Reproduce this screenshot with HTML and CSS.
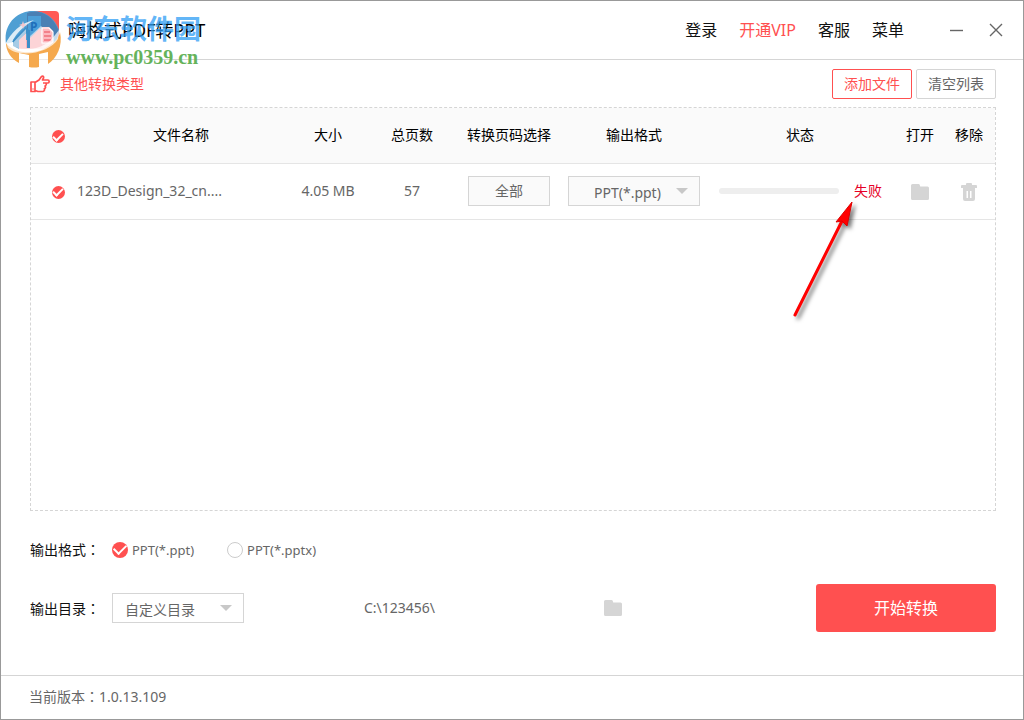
FILE: index.html
```html
<!DOCTYPE html>
<html lang="zh-CN">
<head>
<meta charset="utf-8">
<title>嗨格式PDF转PPT</title>
<link rel="stylesheet" href="styles.css">
</head>
<body>
<div class="window">
  <header class="titlebar">
    <svg class="logo" viewBox="0 0 32 38" aria-hidden="true">
      <rect width="32" height="38" rx="4" fill="#ff5a55"/>
    </svg>
    <h1 class="title">嗨格式PDF转PPT</h1>
    <nav class="nav">
      <a href="#">登录</a>
      <a href="#" class="vip">开通VIP</a>
      <a href="#">客服</a>
      <a href="#">菜单</a>
    </nav>
    <div class="controls">
      <button class="control" aria-label="最小化"><svg viewBox="0 0 14 14"><path d="M0 7.5h13"/></svg></button>
      <button class="control" aria-label="关闭"><svg viewBox="0 0 14 14"><path d="M1 1l12 12M13 1L1 13"/></svg></button>
    </div>
    <div class="watermark">
      <svg class="mark" viewBox="0 0 58 58" aria-hidden="true">
        <path d="M14 22h40v14q0 3-3 3H14z" fill="#fbb1b6"/>
        <path d="M1 34C-2 14 12 1 28 1c12 0 22 7 26 19l-2 10H14z" fill="#4f9fd3"/>
        <path d="M22 3c12-4 25 1 31 16l-1 12L36 16 25 27l-3-6z" fill="#4a80b4"/>
        <path d="M23 6h13v20H23z" fill="#4c9fd8"/>
        <path d="M0 35C6 22 16 13 29 10 17 17 9 25 5 37z" fill="#fff" fill-opacity=".8"/>
        <path d="M8 36V30L21 17l4 4v17h-3V23l-8 9v7z" fill="#3d8fc8"/>
        <path d="M4 37L21 19v4L14 31v22l10 3V27L36 16l12 13v9l-5 4v13l-9 1V44H24V27l12-8 9 11v8H14z" fill="#fff" fill-opacity=".55"/>
        <path d="M14 30l7-7v15h-7zM25 28l10-10 2 3v17H25z" fill="#fcd4d7"/>
        <path d="M22 20h3v18h-3zM48 24l4 5v8h-4z" fill="#3d8fc8"/>
        <path d="M37 17h7l4 4v12H37z" fill="#fcb9bf"/>
        <path d="M37 18h7l4 4v11H37z" fill="none" stroke="#fff" stroke-width="1.2"/>
        <path d="M39 22h6M39 26h7M39 30h7" stroke="#ef6f7b" stroke-width="1.5"/>
        <path d="M18 11l1 3 3 1-3 1-1 3-1-3-3-1 3-1z" fill="#f5c6cb"/>
        <path d="M1 33c7 10 28 13 41 4 7-4 12-9 13-15 3 14-3 26-12 32V42l-9 2v13q-5 1-10 0V45l-10-2v10C6 49 1 41 1 33z" fill="#f5a94e"/>
        <path d="M1 32c10 10 32 10 45-2l8-10-1 9C46 42 16 49 3 38z" fill="#fff" fill-opacity=".7"/>
      </svg>
      <span class="mark-letter">P</span>
      <div class="mark-text">
        <span class="mark-name">河东软件园</span>
        <span class="mark-url">www.pc0359.cn</span>
      </div>
    </div>
  </header>

  <main class="content">
    <div class="toolbar">
      <a href="#" class="other">
        <svg class="hand" viewBox="0 0 20 18" aria-hidden="true">
          <path d="M1 7h4v9.500H1zM5 7.500L9 5l2.500-3.500c1-1 2.500 0 2 1.500L12.500 5H18c1.500 0 1.500 3 0 3h-5M15.500 8c1.200.5 1 2.500-.5 3 1 .8.500 2.400-.7 2.700.6 1-.1 2.600-1.300 2.800H8L5 15.500" />
          <path d="M2.500 14h1"/>
        </svg>
        <span>其他转换类型</span>
      </a>
      <div class="actions">
        <button class="btn btn-add">添加文件</button>
        <button class="btn">清空列表</button>
      </div>
    </div>

    <section class="panel">
      <table class="files">
        <colgroup>
          <col class="c-check"><col class="c-name"><col class="c-size"><col class="c-pages"><col class="c-range"><col class="c-format"><col><col class="c-open"><col class="c-remove">
        </colgroup>
        <thead>
          <tr>
            <th class="check-cell"><input type="checkbox" class="tick" checked aria-label="全选"></th>
            <th>文件名称</th><th>大小</th><th>总页数</th><th>转换页码选择</th><th>输出格式</th><th>状态</th><th>打开</th><th>移除</th>
          </tr>
        </thead>
        <tbody>
          <tr>
            <td class="check-cell"><input type="checkbox" class="tick" checked aria-label="选择文件"></td>
            <td class="name">123D_Design_32_cn....</td>
            <td>4.05 MB</td>
            <td>57</td>
            <td><button class="range">全部</button></td>
            <td>
              <div class="select select-row">
                <select aria-label="输出格式"><option>PPT(*.ppt)</option><option>PPT(*.pptx)</option></select>
              </div>
            </td>
            <td>
              <div class="status">
                <div class="bar"></div>
                <span class="failed">失败</span>
                <svg class="pointer" viewBox="0 0 76 130" aria-hidden="true">
                  <path class="pointer-line" d="M9 118L56 24"/>
                  <path class="pointer-head" d="M66 5L50 25l6-1 5 5z"/>
                </svg>
              </div>
            </td>
            <td><button class="icon" aria-label="打开"><svg class="folder" viewBox="0 0 18 16"><path d="M1.500 0h6q1 0 1.300 1l.4 1.500H16.500Q18 2.500 18 4v10.500q0 1.500-1.500 1.500h-15Q0 16 0 14.500v-13Q0 0 1.500 0z"/></svg></button></td>
            <td><button class="icon" aria-label="移除"><svg class="trash" viewBox="0 0 16 18"><path fill-rule="evenodd" d="M5 2V1q0-1 1-1h4q1 0 1 1v1h4q1 0 1 1v2H14V16q0 2-2 2H4q-2 0-2-2V5H0V3q0-1 1-1zM5.500 8v7H7V8zM9 8v7h1.500V8z"/></svg></button></td>
          </tr>
        </tbody>
      </table>
    </section>

    <section class="output">
      <div class="settings">
        <div class="formats" role="radiogroup" aria-labelledby="format-label">
          <span class="label" id="format-label">输出格式<span class="colon" lang="zh-TW">：</span></span>
          <label class="choice"><input type="radio" name="format" class="tick tick-large" checked><span>PPT(*.ppt)</span></label>
          <label class="choice"><input type="radio" name="format" class="tick tick-large"><span>PPT(*.pptx)</span></label>
        </div>
        <div class="directory">
          <label class="label" for="directory">输出目录<span class="colon" lang="zh-TW">：</span></label>
          <div class="select">
            <select id="directory"><option>自定义目录</option></select>
          </div>
          <span class="path">C:\123456\</span>
          <button class="icon" aria-label="选择目录"><svg class="folder" viewBox="0 0 18 16"><path d="M1.500 0h6q1 0 1.300 1l.4 1.500H16.500Q18 2.500 18 4v10.500q0 1.500-1.500 1.500h-15Q0 16 0 14.500v-13Q0 0 1.500 0z"/></svg></button>
        </div>
      </div>
      <button class="start">开始转换</button>
    </section>
  </main>

  <footer class="footer">当前版本<span class="colon" lang="zh-TW">：</span>1.0.13.109</footer>
</div>
</body>
</html>
```

FILE: styles.css
```css
* {
  box-sizing: border-box;
}

body {
  margin: 0;
  font: 14px/20px "Noto Sans", "Noto Sans CJK SC", sans-serif;
  color: #666;
  background: #fff;
}

button,
select,
input {
  margin: 0;
  padding: 0;
  font: inherit;
  color: inherit;
}

button {
  border: 0;
  background: none;
  cursor: pointer;
}

a {
  color: inherit;
  text-decoration: none;
}

.window {
  display: flex;
  flex-direction: column;
  min-height: 100vh;
  border: 1px solid #999;
}

/* Title bar */
.titlebar {
  position: relative;
  display: flex;
  align-items: center;
  height: 59px;
  padding: 0 20px 0 26px;
  border-bottom: 1px solid #d5d5d5;
}

.logo {
  width: 32px;
  height: 38px;
}

.title {
  margin: 0 auto 0 9px;
  font-size: 18px;
  line-height: 24px;
  font-weight: 400;
  color: #000;
}

.nav {
  display: flex;
  gap: 22px;
  font-size: 16px;
  color: #111;
}

.nav .vip {
  color: #ff5050;
}

.controls {
  display: flex;
  gap: 25px;
  margin-left: 46px;
}

.control {
  width: 14px;
  height: 14px;
}

.control svg {
  display: block;
  fill: none;
  stroke: #666;
  stroke-width: 1.4;
}

.watermark {
  position: absolute;
  top: 9px;
  left: 4px;
  display: flex;
  gap: 3px;
  pointer-events: none;
}

.mark {
  width: 58px;
  height: 58px;
}

.mark-letter {
  position: absolute;
  top: 9px;
  left: 25px;
  font-size: 12px;
  line-height: 16px;
  font-weight: 700;
  color: #2070bb;
}

.mark-text {
  display: flex;
  flex-direction: column;
}

.mark-name {
  font: 700 27px/36px "Noto Sans CJK SC", sans-serif;
  color: rgba(48, 158, 245, 0.76);
}

.mark-url {
  font: 700 20px/22px "Liberation Serif", serif;
  color: #65b35b;
}

/* Toolbar */
.content {
  display: flex;
  flex: 1;
  flex-direction: column;
  padding: 0 27px 0 29px;
}

.toolbar {
  display: flex;
  align-items: center;
  justify-content: space-between;
  height: 47px;
}

.other {
  display: flex;
  align-items: center;
  gap: 10px;
  color: #ff5050;
}

.hand {
  width: 20px;
  height: 18px;
  fill: none;
  stroke: #ff5050;
  stroke-width: 1.7;
  stroke-linejoin: round;
}

.actions {
  display: flex;
  gap: 4px;
}

.btn {
  width: 80px;
  height: 30px;
  border: 1px solid #d5d5d5;
  border-radius: 2px;
}

.btn-add {
  border-color: #ff5050;
  color: #ff5050;
}

/* File list */
.panel {
  flex: 1;
  border: 1px dashed #d5d5d5;
}

.files {
  width: 100%;
  border-collapse: collapse;
  table-layout: fixed;
  text-align: center;
}

.c-check { width: 46px; }
.c-name { width: 208px; }
.c-size { width: 86px; }
.c-pages { width: 82px; }
.c-range { width: 112px; }
.c-format { width: 138px; }
.c-open { width: 46px; }
.c-remove { width: 52px; }

.files th,
.files td {
  height: 56px;
  padding: 0;
  border-bottom: 1px solid #e5e5e5;
}

.files th {
  height: 55px;
  font-weight: 400;
  color: #000;
  background: #fafafa;
}

.files .check-cell {
  padding-left: 8px;
}

.files .name {
  text-align: left;
}

.tick {
  display: inline-grid;
  flex: none;
  place-items: center;
  width: 13px;
  height: 13px;
  border: 1px solid #ccc;
  border-radius: 50%;
  background: #fff;
  vertical-align: middle;
  appearance: none;
}

.tick:checked {
  border: 0;
  background: #ff5050;
}

.tick:checked::after {
  content: "";
  width: 8px;
  height: 4px;
  margin-bottom: 2px;
  border: solid #fff;
  border-width: 0 0 2px 2px;
  transform: rotate(-45deg);
}

.tick-large {
  width: 16px;
  height: 16px;
}

.tick-large:checked::after {
  width: 10px;
  height: 6px;
  margin-bottom: 3px;
}

.range {
  width: 82px;
  height: 30px;
  border: 1px solid #d5d5d5;
  background: #fafafa;
}

.select {
  position: relative;
  display: inline-block;
  width: 132px;
  height: 30px;
  vertical-align: middle;
}

.select select {
  width: 100%;
  height: 100%;
  padding: 3px 0 0 12px;
  border: 1px solid #d5d5d5;
  border-radius: 0;
  background: #fff;
  appearance: none;
}

.select::after {
  content: "";
  position: absolute;
  top: 12px;
  right: 12px;
  border: solid transparent;
  border-width: 6px 6px 0;
  border-top-color: #c8c8c8;
  pointer-events: none;
}

.select-row select {
  padding-left: 25px;
  background: #fafafa;
}

.status {
  position: relative;
  display: flex;
  align-items: center;
  gap: 15px;
  padding: 0 15px 0 16px;
}

.bar {
  flex: 1;
  height: 6px;
  border-radius: 3px;
  background: #eee;
}

.failed {
  color: #e60026;
}

.pointer {
  position: absolute;
  top: 16px;
  right: 35px;
  z-index: 1;
  width: 76px;
  height: 130px;
  overflow: visible;
  filter: drop-shadow(3px 3px 2px rgba(0, 0, 0, 0.55));
  pointer-events: none;
}

.pointer-line {
  stroke: #f00;
  stroke-width: 3;
  stroke-linecap: round;
}

.pointer-head {
  fill: #f00;
  stroke: #d00;
}

.icon {
  display: inline-block;
  vertical-align: middle;
}

.icon svg {
  display: block;
  fill: #d5d5d5;
}

.folder {
  width: 18px;
  height: 16px;
}

.trash {
  width: 16px;
  height: 18px;
}

/* Output settings */
.output {
  display: flex;
  align-items: flex-end;
  gap: 40px;
  padding: 28px 0 43px;
}

.settings {
  display: flex;
  flex: 1;
  flex-direction: column;
  gap: 33px;
  padding-bottom: 9px;
}

.formats,
.directory {
  display: flex;
  align-items: center;
}

.label {
  width: 82px;
  color: #111;
}

.colon {
  font-family: "Noto Sans CJK TC", sans-serif;
}

.choice {
  display: flex;
  align-items: center;
  gap: 4px;
  margin-right: 33px;
  font-size: 13px;
}

.path {
  width: 240px;
  margin-left: 120px;
}

.start {
  width: 180px;
  height: 48px;
  border-radius: 3px;
  background: #ff5050;
  color: #fff;
  font-size: 16px;
}

.footer {
  padding: 10px 28px 12px;
  border-top: 1px solid #d5d5d5;
}
```
